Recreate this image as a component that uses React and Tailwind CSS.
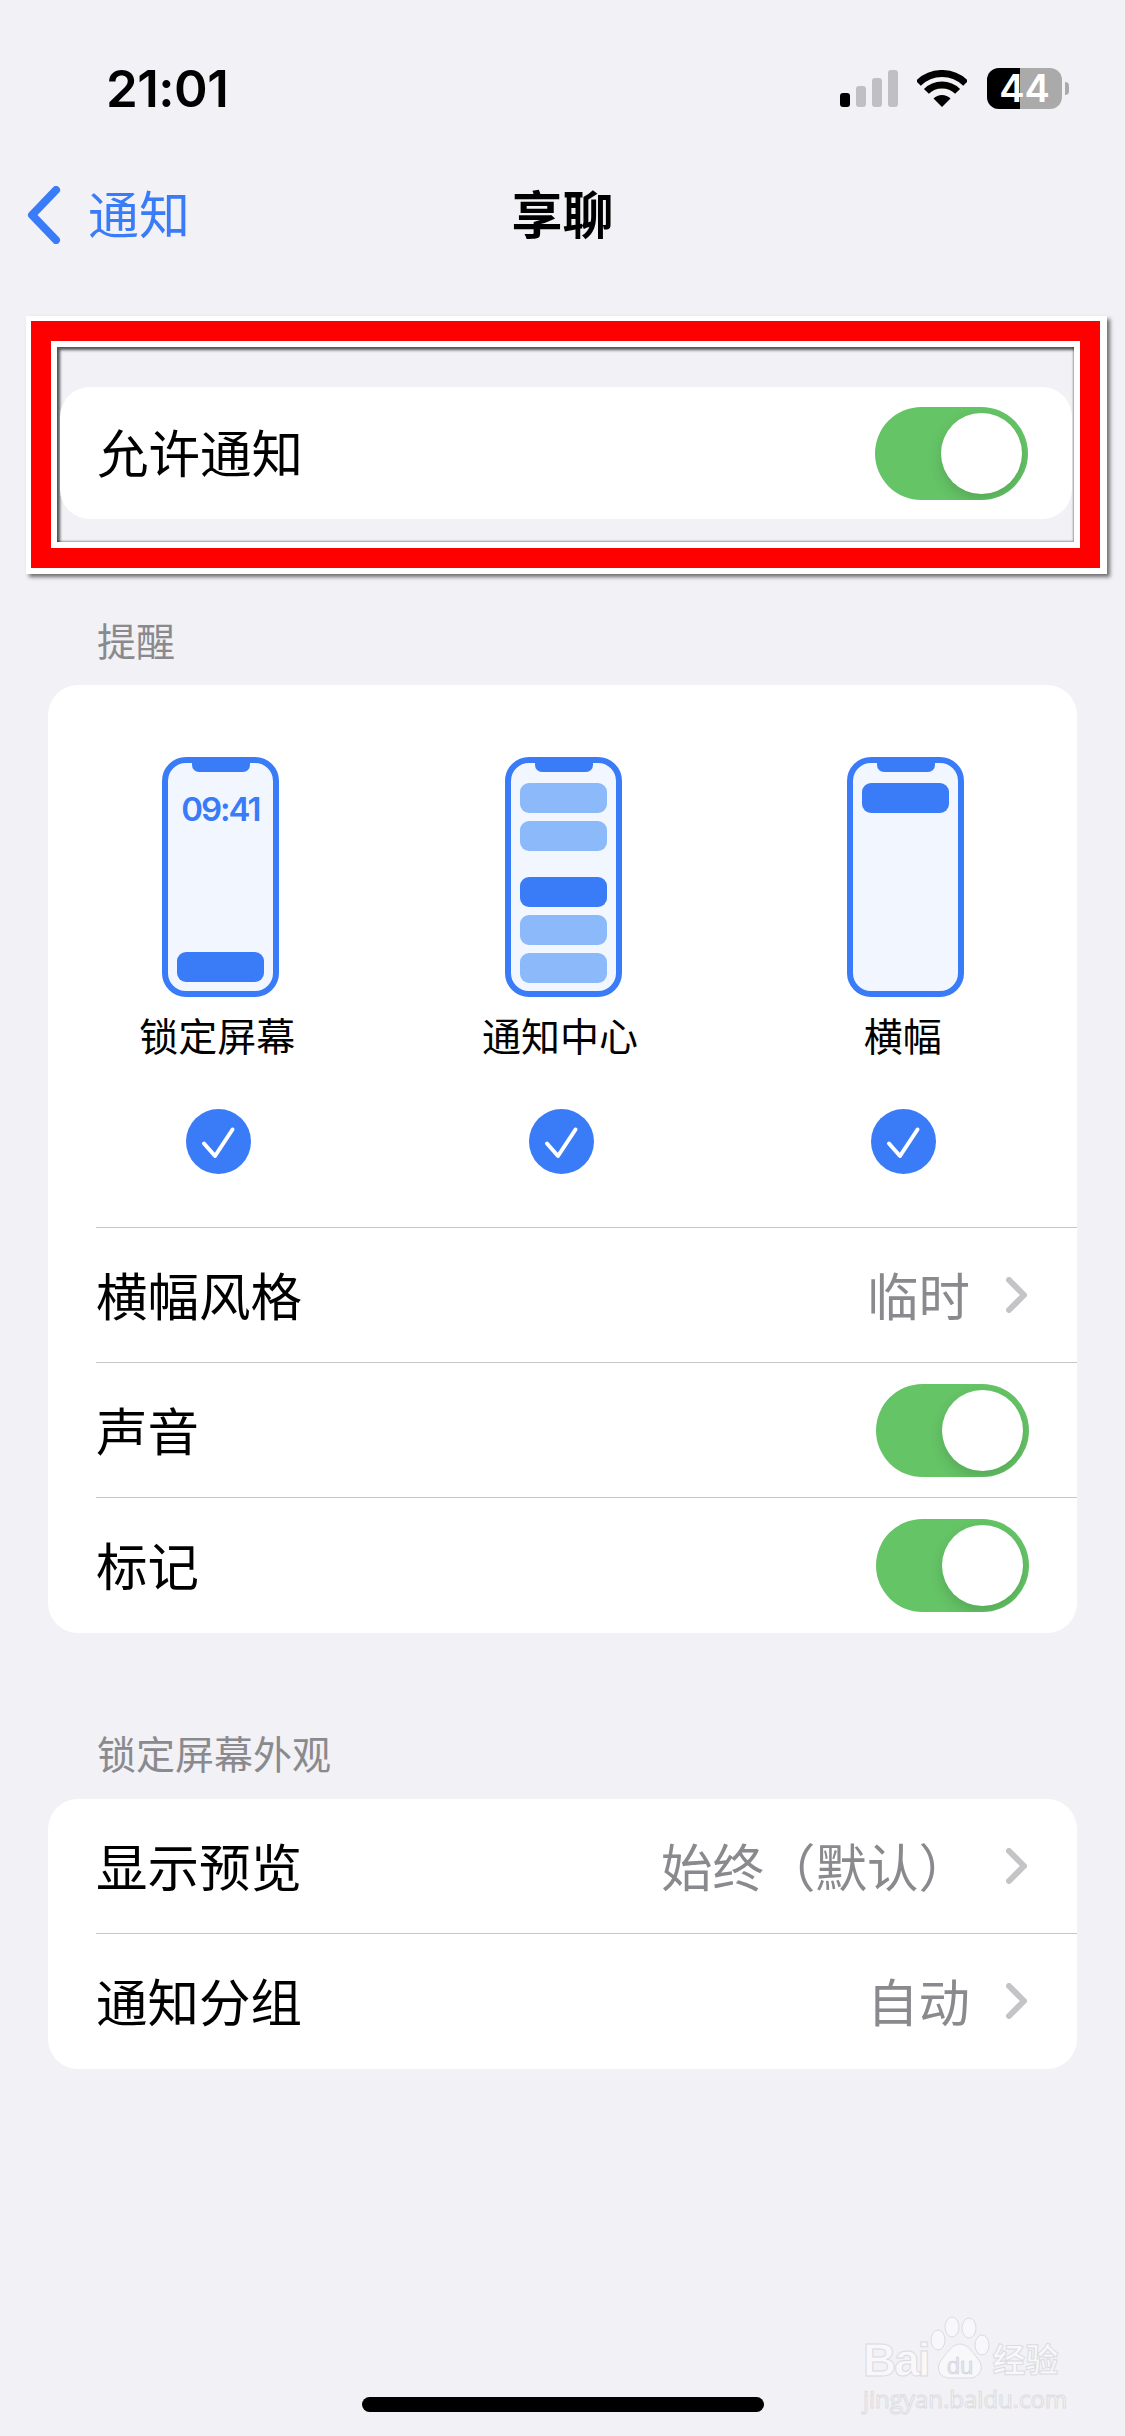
import React from "react";

const BLUE = "#3a7bf7";

const Toggle = () => (
  <div className="w-[153px] h-[93px] rounded-full bg-[#65c466] flex items-center justify-end pr-[6px] overflow-hidden shrink-0">
    <div className="w-[81px] h-[81px] rounded-full bg-white shadow-[0_6px_14px_rgba(0,0,0,0.14)]" />
  </div>
);

const Chevron = () => (
  <svg width="21" height="36" viewBox="0 0 21 36" className="ml-[36px] mr-[2px] shrink-0">
    <path d="M3 3 L18 18 L3 33" fill="none" stroke="#c4c4c7" strokeWidth="6" strokeLinecap="round" strokeLinejoin="round" />
  </svg>
);

const Divider = () => <div className="ml-[48px] h-px bg-[#c6c6c8]" />;

const Row = ({ label, value, toggle }) => (
  <div className="h-[134px] pl-[48px] pr-[48px] flex items-center justify-between text-[51.5px] leading-none text-black">
    <span className="pt-[5px]">{label}</span>
    {toggle ? (
      <Toggle />
    ) : (
      <div className="flex items-center">
        <span className="pt-[5px] text-[#8a8a8e]">{value}</span>
        <Chevron />
      </div>
    )}
  </div>
);

const Bar = ({ light }) => (
  <div className={`w-[87px] h-[30px] rounded-[9px] ${light ? "bg-[#8cb9f9]" : "bg-[#3a7bf7]"}`} />
);

// small phone outline used by the alert style pickers
const Phone = ({ children, className }) => (
  <div className="relative w-[117px] h-[240px] rounded-[24px] border-[6px] border-[#3a7bf7] bg-[#f2f7ff]">
    <div className="absolute left-[24px] top-[-6px] w-[58px] h-[15px] rounded-b-[7px] bg-[#3a7bf7]" />
    <div className={`h-full flex flex-col items-center ${className}`}>{children}</div>
  </div>
);

const Check = () => (
  <svg width="65" height="65" viewBox="0 0 65 65" className="mt-[47px] mr-[4px]">
    <circle cx="32.5" cy="32.5" r="32.5" fill={BLUE} />
    <path d="M18 34.5 L29 47 L46.5 20.5" fill="none" stroke="#fff" strokeWidth="4" strokeLinecap="round" strokeLinejoin="round" />
  </svg>
);

const Style = ({ label, children }) => (
  <div className="w-[343px] flex flex-col items-center">
    {children}
    <div className="mt-[15px] mr-[6px] h-[50px] pb-[2px] flex items-center text-[39px] leading-none text-black">{label}</div>
    <Check />
  </div>
);

const SectionLabel = ({ children, className }) => (
  <div className={`ml-[97px] h-[54px] pb-[2px] flex items-center text-[39px] leading-none text-[#8a8a8e] ${className}`}>{children}</div>
);

const StatusBar = () => (
  <div className="h-[176px] flex items-center justify-between pl-[106px] pr-[56px]">
    <span className="text-[51px] leading-none font-semibold text-black tracking-[-0.5px]">21:01</span>
    <div className="flex items-center">
      <div className="flex items-end gap-[6px] h-[37px] mt-[1px]">
        <div className="w-[10px] h-[14px] rounded-[3px] bg-black" />
        <div className="w-[10px] h-[21px] rounded-[3px] bg-[#c0c0c4]" />
        <div className="w-[10px] h-[29px] rounded-[3px] bg-[#c0c0c4]" />
        <div className="w-[10px] h-[37px] rounded-[3px] bg-[#c0c0c4]" />
      </div>
      <svg width="50" height="37" viewBox="0 0 50 37" className="ml-[19px] mt-[1px]">
        <path d="M1.3 13.3 A33.5 33.5 0 0 1 48.7 13.3" fill="none" stroke="#000" strokeWidth="7" />
        <path d="M9.4 21.4 A22 22 0 0 1 40.6 21.4" fill="none" stroke="#000" strokeWidth="7" />
        <path d="M25 37 L16.5 28.5 A12 12 0 0 1 33.5 28.5 Z" fill="#000" />
      </svg>
      <div className="ml-[20px] relative w-[75px] h-[41px] rounded-[12px] bg-[#aaaaaa] flex items-center justify-center">
        <div className="absolute left-0 top-0 bottom-0 w-[33px] rounded-l-[12px] bg-black" />
        <span className="relative text-[38px] leading-[41px] font-semibold text-white">44</span>
      </div>
      <div className="ml-[3px] w-[4px] h-[13px] rounded-r-full bg-[#aaaaaa]" />
    </div>
  </div>
);

const NavBar = () => (
  <div className="relative h-[78px] flex items-center justify-center">
    <div className="absolute left-[27px] top-[10px] flex items-center">
      <svg width="34" height="58" viewBox="0 0 34 58">
        <path d="M29 4 L5 29 L29 54" fill="none" stroke={BLUE} strokeWidth="8" strokeLinecap="round" strokeLinejoin="round" />
      </svg>
      <span className="ml-[27px] text-[51px] leading-none text-[#3a7bf7]">通知</span>
    </div>
    <span className="text-[51px] leading-none font-bold text-black">享聊</span>
  </div>
);

const Watermark = () => (
  <div className="absolute left-[863px] top-[2316px] w-[210px] h-[96px] text-[#f8f8fb] select-none">
    <div className="flex items-end h-[64px] whitespace-nowrap">
      <span className="text-[46px] leading-[40px] font-bold tracking-[-2px] [-webkit-text-stroke:1px_#dcdce0] font-['Liberation_Sans']">Bai</span>
      <svg width="62" height="64" viewBox="0 0 62 64" className="ml-[1px] shrink-0">
        <g fill="#f8f8fb" stroke="#dcdce0" strokeWidth="1">
          <ellipse cx="8" cy="24" rx="7" ry="10" />
          <ellipse cx="22" cy="11" rx="7" ry="10" />
          <ellipse cx="39" cy="12" rx="7" ry="10" />
          <ellipse cx="52" cy="29" rx="7" ry="10" />
          <path d="M30 28 C38 28 44 38 50 46 C54 54 48 62 40 62 L20 62 C10 62 6 54 10 46 C16 38 22 28 30 28 Z" />
        </g>
        <text x="30" y="58" textAnchor="middle" fontSize="24" fontFamily="Liberation Sans" fill="#e4e4e8" stroke="#cfcfd4" strokeWidth="0.5">du</text>
      </svg>
      <span className="ml-[1px] text-[33px] leading-[40px] font-bold [-webkit-text-stroke:1px_#dcdce0]">经验</span>
    </div>
    <div className="mt-[6px] text-[24px] leading-[26px] whitespace-nowrap font-['Open_Sans'] [-webkit-text-stroke:1px_#dcdce0]">jingyan.baidu.com</div>
  </div>
);

const App = () => {
  return (
    <div className="relative w-[1125px] h-[2436px] flex flex-col bg-[#f1f1f6] font-['Inter','Noto_Sans_CJK_SC',sans-serif] overflow-hidden">
      <StatusBar />
      <NavBar />

      {/* red annotation box around the first row */}
      <div className="mt-[62px] ml-[26px] w-[1081px] h-[258px] bg-white pl-[5px] pr-[7px] pt-[5px] pb-[6px] shadow-[3px_3px_4px_rgba(0,0,0,0.55)]">
        <div className="h-full bg-[#ff0000] pl-[20px] pr-[20px] py-[20px]">
          <div className="h-full bg-white pl-[6px] pr-[6px] pt-[6px] pb-[6px]">
            <div className="h-full bg-[#f1f1f6] pl-[3px] pr-[2px] pt-[40px] shadow-[inset_3px_3px_3px_rgba(0,0,0,0.65),inset_-1px_-1px_2px_rgba(0,0,0,0.35)]">
              <div className="h-[132px] rounded-[30px] bg-white pl-[37px] pr-[44px] flex items-center justify-between text-[51.5px] leading-none text-black">
                <span className="pt-[3px]">允许通知</span>
                <Toggle />
              </div>
            </div>
          </div>
        </div>
      </div>

      <SectionLabel className="mt-[41px]">提醒</SectionLabel>
      <div className="mt-[16px] mx-[48px] rounded-[30px] bg-white pt-[72px] pb-px">
        <div className="flex ml-[1px]">
          <Style label="锁定屏幕">
            <Phone className="justify-between pt-[31px] pb-[9px]">
              <span className="text-[33px] leading-[30px] font-semibold tracking-[-2px] text-[#3a7bf7]">09:41</span>
              <Bar />
            </Phone>
          </Style>
          <Style label="通知中心">
            <Phone className="pt-[20px]">
              <Bar light />
              <div className="mt-[8px]"><Bar light /></div>
              <div className="mt-[26px]"><Bar /></div>
              <div className="mt-[8px]"><Bar light /></div>
              <div className="mt-[8px]"><Bar light /></div>
            </Phone>
          </Style>
          <Style label="横幅">
            <Phone className="pt-[20px]">
              <Bar />
            </Phone>
          </Style>
        </div>
        <div className="mt-[53px]"><Divider /></div>
        <Row label="横幅风格" value="临时" />
        <Divider />
        <Row label="声音" toggle />
        <Divider />
        <Row label="标记" toggle />
      </div>

      <SectionLabel className="mt-[95px]">锁定屏幕外观</SectionLabel>
      <div className="mt-[17px] mx-[48px] rounded-[30px] bg-white pb-px">
        <Row label="显示预览" value="始终（默认）" />
        <Divider />
        <Row label="通知分组" value="自动" />
      </div>

      <div className="mt-auto mb-[24px] mx-auto w-[402px] h-[15px] rounded-full bg-black" />
      <Watermark />
    </div>
  );
};

export default App;
